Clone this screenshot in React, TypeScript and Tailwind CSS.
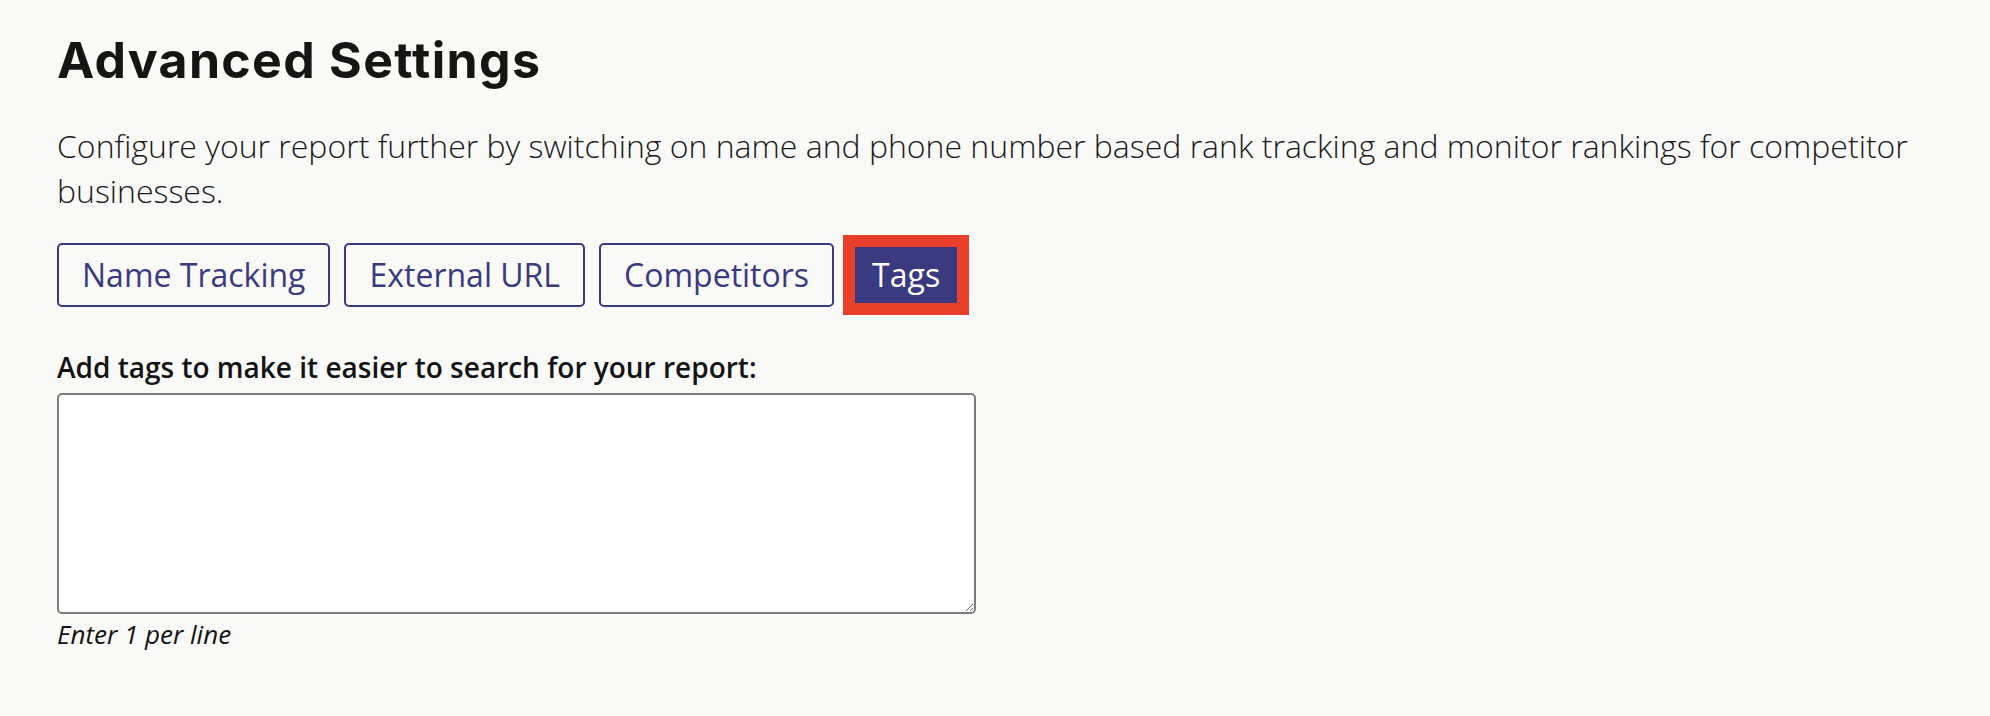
import React from "react";

const sans = { fontFamily: '"Open Sans", "Liberation Sans", sans-serif' };

export default function App() {
  const tabs = ["Name Tracking", "External URL", "Competitors"];
  return (
    <div
      className="min-h-[716px] w-full bg-[#f9f9f8] px-[57px] pt-[31px] text-[#161616]"
      style={sans}
    >
      <h1
        className="text-[50px] leading-[58px] font-bold tracking-[1.3px] text-[#151515]"
        style={{ fontFamily: '"Inter", "Liberation Sans", sans-serif' }}
      >
        Advanced Settings
      </h1>
      <p className="mt-[34px] text-[32px] leading-[45px] font-light text-[#1a1a1a]">
        Configure your report further by switching on name and phone number based rank tracking and monitor rankings for competitor businesses.
      </p>
      <div className="mt-[22px] flex items-center gap-[14px]">
        {tabs.map((t) => (
          <button
            key={t}
            className="h-[64px] rounded-[5px] border-2 border-[#3a3a80] bg-[#f9f9f8] px-[23px] text-[32px] leading-[60px] text-[#3a3a80]"
          >
            {t}
          </button>
        ))}
        <button className="-ml-[5px] h-[80px] border-[12px] border-[#e8402b] bg-[#3a3a80] px-[17px] text-[32px] leading-[56px] text-white">
          Tags
        </button>
      </div>
      <label className="mt-[34px] block text-[28px] leading-[36px] font-semibold text-[#141414]">
        Add tags to make it easier to search for your report:
      </label>
      <textarea className="mt-[8px] block h-[221px] w-[919px] rounded-[5px] border-2 border-[#7c7c7c] bg-white" />
      <div className="mt-[3px] text-[26px] leading-[34px] italic text-[#141414]">
        Enter 1 per line
      </div>
    </div>
  );
}
